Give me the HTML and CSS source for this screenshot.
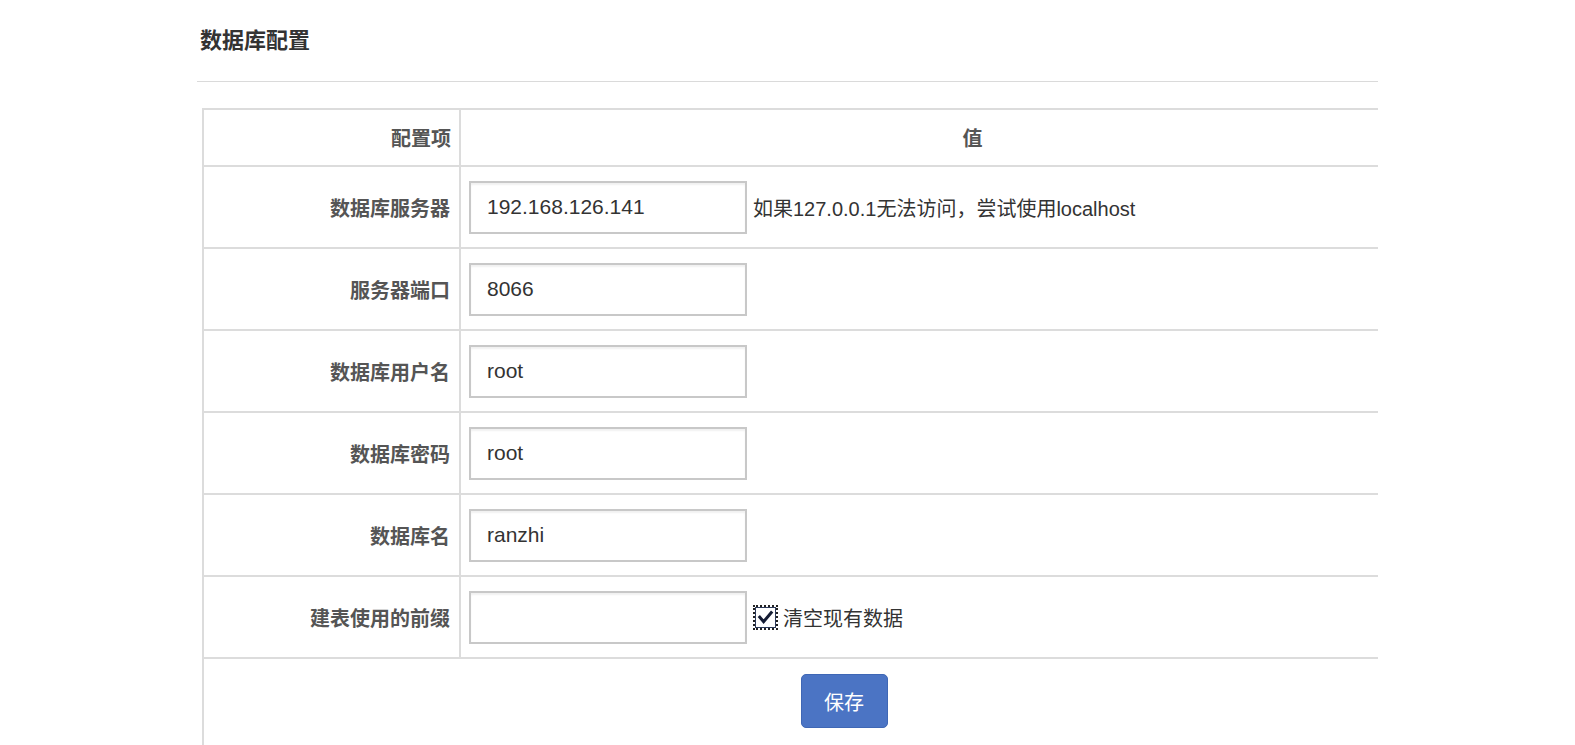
FILE: index.html
```html
<!DOCTYPE html>
<html lang="zh-CN">
<head>
  <meta charset="UTF-8" />
  <meta name="viewport" content="width=device-width, initial-scale=1" />
  <title>数据库配置</title>
  <link rel="stylesheet" href="styles.css">
</head>
<body>
  <div class="panel">
    <h3 class="panel-title">数据库配置</h3>
    <hr class="divider">

    <form class="db-form" onsubmit="return false;">
      <table class="cfg-table">
        <thead>
          <tr>
            <th class="col-key">配置项</th>
            <th class="col-val">值</th>
          </tr>
        </thead>
        <tbody>
          <tr>
            <th>数据库服务器</th>
            <td>
              <input type="text" class="field" value="192.168.126.141"><span class="hint">如果127.0.0.1无法访问，尝试使用localhost</span>
            </td>
          </tr>
          <tr>
            <th>服务器端口</th>
            <td><input type="text" class="field" value="8066"></td>
          </tr>
          <tr>
            <th>数据库用户名</th>
            <td><input type="text" class="field" value="root"></td>
          </tr>
          <tr>
            <th>数据库密码</th>
            <td><input type="text" class="field" value="root"></td>
          </tr>
          <tr>
            <th>数据库名</th>
            <td><input type="text" class="field" value="ranzhi"></td>
          </tr>
          <tr>
            <th>建表使用的前缀</th>
            <td>
              <input type="text" class="field" value=""><label class="check">
                <span class="check-box">
                  <svg width="17" height="17" viewBox="0 0 17 17">
                    <path d="M2.8 8.2 L6.6 12.6 L14.2 3.6" fill="none" stroke="#141c34" stroke-width="3" stroke-linecap="square"/>
                  </svg>
                </span>
                清空现有数据
              </label>
            </td>
          </tr>
          <tr>
            <td colspan="2" class="actions">
              <button type="submit" class="btn-save">保存</button>
            </td>
          </tr>
        </tbody>
      </table>
    </form>
  </div>
</body>
</html>
```

FILE: styles.css
```css
body {
  font-family: "Liberation Sans", "Noto Sans CJK SC", sans-serif;
  background-color: #fff;
  color: #333;
  margin: 0;
  padding: 0;
}
.panel {
  margin-left: 197px;
  width: 1181px;
  padding-top: 27px;
  overflow: hidden;
  height: 745px;
  box-sizing: border-box;
}
.panel-title {
  margin: 0;
  padding-left: 3px;
  font-size: 22px;
  line-height: 28px;
  font-weight: bold;
  color: #333;
}
.divider {
  margin: 26px 0 0;
  border: 0;
  border-top: 1px solid #dadada;
  height: 0;
}
.db-form {
  margin: 26px 0 0 5px;
}
.cfg-table {
  width: 1284px;
  border-collapse: collapse;
  border: 2px solid #dcdcdc;
}
.cfg-table th,
.cfg-table td {
  border: 2px solid #dcdcdc;
  padding: 0 8px;
  height: 80px;
  font-size: 20px;
  vertical-align: middle;
}
.cfg-table tbody th {
  width: 238px;
  text-align: right;
  color: #555;
  font-weight: bold;
  padding-right: 9px;
}
.cfg-table thead th {
  height: 55px;
  color: #555;
}
.col-key {
  text-align: right;
  padding-right: 9px;
}
.col-val {
  text-align: center;
}
.field {
  width: 278px;
  height: 53px;
  box-sizing: border-box;
  border: 2px solid #c8c8c8;
  box-shadow: inset 0 2px 2px rgba(0, 0, 0, 0.06);
  padding: 0 16px;
  font-family: "Liberation Sans", sans-serif;
  font-size: 21px;
  color: #333;
  vertical-align: middle;
  margin: 0;
}
.hint {
  margin-left: 6px;
  vertical-align: middle;
  color: #333;
}
.check {
  display: inline-flex;
  align-items: center;
  gap: 7px;
  margin-left: 6px;
  vertical-align: middle;
  color: #333;
}
.check-box {
  width: 19px;
  height: 19px;
  border: 1px solid #2c3a5a;
  outline: 2px dotted #222;
  outline-offset: 0;
  background: #fff;
  display: flex;
  align-items: center;
  justify-content: center;
  margin-left: 2px;
}
.cfg-table .actions {
  text-align: center;
  vertical-align: top;
  height: auto;
  padding: 15px 0 80px;
}
.btn-save {
  display: block;
  margin: 0 auto;
  width: 87px;
  height: 54px;
  background-color: #4b74c4;
  border: 1px solid #3f67b5;
  border-radius: 5px;
  color: #fff;
  font-family: "Liberation Sans", "Noto Sans CJK SC", sans-serif;
  font-size: 20px;
  cursor: pointer;
}
```
